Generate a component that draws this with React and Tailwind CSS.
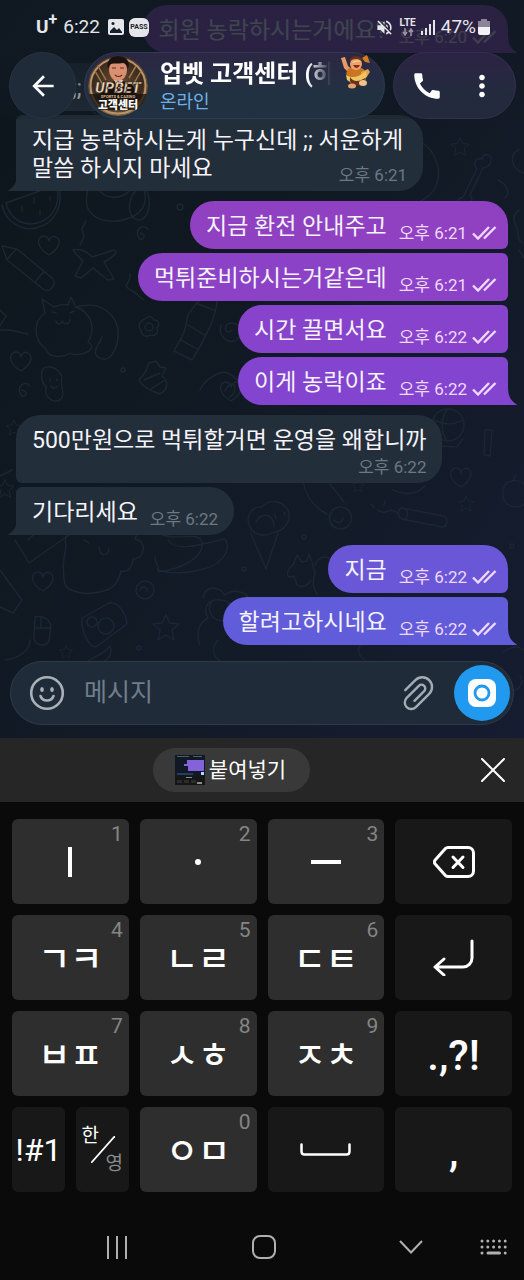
import { MdArrowBack, MdCall, MdMoreVert, MdVolumeOff } from "react-icons/md";

const groups = [
  {
    out: true,
    items: [{ text: "회원 농락하시는거에요?", time: "오후 6:20", color: "bg-[#9040bc]" }],
  },
  {
    out: false,
    items: [
      { text: ";;", indent: true },
      { text: "지급 농락하시는게 누구신데 ;; 서운하게\n말씀 하시지 마세요", time: "오후 6:21", layout: "overlap" },
    ],
  },
  {
    out: true,
    items: [
      { text: "지금 환전 안내주고", time: "오후 6:21", color: "bg-[#8f41c2]" },
      { text: "먹튀준비하시는거같은데", time: "오후 6:21", color: "bg-[#8b42c7]" },
      { text: "시간 끌면서요", time: "오후 6:22", color: "bg-[#8743cc]" },
      { text: "이게 농락이죠", time: "오후 6:22", color: "bg-[#8344d0]" },
    ],
  },
  {
    out: false,
    items: [
      { text: "500만원으로 먹튀할거면 운영을 왜합니까", time: "오후 6:22", layout: "stack" },
      { text: "기다리세요", time: "오후 6:22" },
    ],
  },
  {
    out: true,
    items: [
      { text: "지금", time: "오후 6:22", color: "bg-[#6957d8]" },
      { text: "할려고하시네요", time: "오후 6:22", color: "bg-[#615cda]" },
    ],
  },
];

const tailColors = {
  "bg-[#9040bc]": "text-[#9040bc]",
  "bg-[#8344d0]": "text-[#8344d0]",
  "bg-[#615cda]": "text-[#615cda]",
};

function Tail({ out, color }) {
  return (
    <svg
      viewBox="0 0 14 18"
      className={`absolute bottom-0 h-[18px] w-[14px] ${
        out ? `-right-[9px] ${tailColors[color]}` : "-left-2 -scale-x-100 text-[#222e39]"
      }`}
      aria-hidden="true"
    >
      <path d="M0 0h5c0 8 2 13.500 8.500 17.200.6.400.3.800-.4.800H0z" fill="currentColor" />
    </svg>
  );
}

function Ticks() {
  return (
    <svg viewBox="0 0 25 14" className="h-[14px] w-[25px]" fill="none" stroke="currentColor" strokeWidth="2.400" aria-hidden="true">
      <path d="M1 7.500l5 5L17 1M12 12.500L23.500 1" />
    </svg>
  );
}

function Bubble({ item, out, first, last }) {
  const base = "relative w-fit max-w-full rounded-[24px] pt-3 pb-[6px]";
  const side = out
    ? `self-end pl-4 pr-[11px] rounded-br-md ${item.color} ${first ? "" : "rounded-tr-md"}`
    : `self-start px-4 rounded-bl-md bg-[#222e39] ${first ? "" : "rounded-tl-md"}`;

  let inner = "flex items-end gap-3";
  if (item.layout === "stack") inner = "flex flex-col";
  if (item.layout === "overlap") inner = "grid";

  return (
    <div className={`${base} ${side}`}>
      {last && <Tail out={out} color={item.color} />}
      <div className={inner}>
        <p
          className={`mb-[2px] whitespace-pre-line text-[23px] leading-7 text-[#f6f3fa] ${
            item.layout === "overlap" ? "col-start-1 row-start-1 pr-1" : ""
          } ${item.indent ? "pl-10 pr-40" : ""}`}
        >
          {item.text}
        </p>
        {item.time && (
          <div
            className={`flex shrink-0 items-center gap-[5px] text-[17px] leading-5 ${
              out ? "text-[#f0d9fb]" : "self-end text-[#6c7883]"
            } ${item.layout === "overlap" ? "col-start-1 row-start-1 justify-self-end" : ""}`}
          >
            <time>{item.time}</time>
            {out && <Ticks />}
          </div>
        )}
      </div>
    </div>
  );
}

function Star({ x, y, r = 1 }) {
  return <path transform={`translate(${x} ${y}) scale(${r})`} d="M0-13l4 8 9 1-7 6 2 10-8-5-8 5 2-10-7-6 9-1z" />;
}

function Heart({ x, y }) {
  return <path transform={`translate(${x} ${y})`} d="M0 10C-14 2-12-9-5-9-2-9 0-6 0-4 1-8 4-10 7-8 14-4 8 5 0 10z" />;
}

function Flower({ x, y }) {
  return (
    <g transform={`translate(${x} ${y})`}>
      <circle r="4" />
      <path d="M-4-8C0-12 4-10 5-7 10-7 11-2 8 1 10 6 5 10 1 8-3 11-8 8-8 3-12 0-9-7-4-8z" />
    </g>
  );
}

function Doodles() {
  return (
    <svg
      viewBox="0 0 524 738"
      preserveAspectRatio="xMidYMid slice"
      className="absolute inset-0 h-full w-full text-[#1c2733]"
      fill="none"
      stroke="currentColor"
      strokeWidth="1.400"
      strokeLinejoin="round"
      strokeLinecap="round"
      aria-hidden="true"
    >
      <Star x={460} y={147} r={0.7} />
      <Star x={466} y={504} r={0.6} />
      <Star x={166} y={628} r={1} />
      <Star x={66} y={652} r={0.5} />
      <Star x={358} y={486} r={0.5} />
      <Star x={5} y={489} r={0.7} />
      <Star x={14} y={428} r={0.6} />
      <Heart x={49} y={245} />
      <Heart x={461} y={477} />
      <Heart x={21} y={361} />
      <Heart x={43} y={581} />
      <Heart x={231} y={391} />
      <Flower x={149} y={327} />
      <Flower x={100} y={105} />
      {/* watermelon and dog */}
      <path d="M6 203L56 185c7 20-6 38-25 39-12 0-22-8-25-21zM2 205c4 18 20 26 34 23 19-4 29-24 22-44M22 206v5M34 198v5M40 210v5M50 197v3" />
      <path d="M88 190c-6 18 4 30 22 31 14 1 30-5 34-16 3-10 0-18-4-24M98 188c6 12 24 12 32 2M136 190c-10 12-8 28 2 30 12 0 14-20 8-30" />
      {/* pencil */}
      <path d="M2 246l15 3 35 29c6 6-2 16-9 11L7 260zM17 249c-4 3-7 6-10 11M44 272c-4 3-7 7-9 11" />
      {/* plane */}
      <path d="M73 250c10-2 15 3 19 7l22-7c6 2-4 9-10 12l10 17-6 1-15-12-12 10-6-2 8-15-8-8zM80 245l4-8-2-8 4-8" />
      <path d="M140 238c8 2 2 9-1 5-5-9 4-15 9-9M22 395c8 2 2 9-1 5-5-9 4-15 9-9" transform="translate(0 -5)" />
      {/* cat */}
      <path d="M45 313l-3-14 12 8c6-3 9-3 14-2l3-8 5 10c16 6 20 22 12 35 12 8-10 16-18 11-7 5-22 5-24-4-12-8-14-27-1-36zM76 307c25-7 41 8 42 24 1 20-10 34-20 26-7-5 2-14 4-20M56 321c2 5 6 3 6 0 3 5 8 3 8-2M52 312l4 1M70 313l4-2" />
      {/* bottle */}
      <path d="M204 291l13 4c2 17-12 44-25 65l-18-9c8-14 13-22 13-33 2-9 15-17 17-27zM198 304l16 6M188 325l18 11M181 340l16 9" />
      <path d="M232 330c-5 5-10-2-4-6 10-5 18 10 8 16-9 5-18-5-15-15M146 371l3-8 7-2 4 6 6 1-4 8c8 6 5 14-2 18-8-3-19-8-21-14zM144 380l16-7M151 389l14-9" />
      <path d="M44 368c8-4 17 3 18 10-3 6 5 16-2 22-8 4-16-4-14-13-5-5-6-15-2-19zM50 379v2M57 379v2M51 386c2 3 5 3 6 0" />
      <path d="M200 390c4-9 14-16 23-18 9 1 17 9 20 19M225 391c8-16 15-1 5 6" />
      <path d="M12 470l-12 6M0 330h10l18 4M0 310l6 6-6 10M130 274c2 8-8 10-1 15 7 3 10 8 15 11" />
      {/* bone, curve and planet */}
      <path d="M463 197l14-28c-5-6 0-12 5-10 2-7 10-5 9 1 0 6-6 8-8 8l-13 27c5 6-2 12-5 8-7 5-12-3-2-6zM421 142c16 10 22 30 14 46-4 9-14 12-20 17" />
      <path d="M519 150c-10 3-9 19 5 23M519 210c-9 7-4 13-2 18 2 6 0 13 6 15M519 250l5 8M498 180c10 5 12 14 7 18" />
      {/* balloon and rocket */}
      <circle cx="448" cy="425" r="16" />
      <path d="M436 437l3 9 18 1 6-8M434 420c10 5 20 5 28 0M447 409c-7 11-6 24 0 32M485 430h7l-2 26-6-1z" />
      <path d="M303 480c3 20 14 29 24 34M330 484l14 18M340 507a11 11 0 1 0 1 22 11 11 0 0 0-1-22zM334 520c4 4 8 3 9-2" />
      <path d="M402 508l42 8c5 3 3 11-2 11l-40-8c-5-3-5-10 0-11zM405 509c4 3 3 7 0 10M398 514c-9-9-12 3-20-4M374 507l-3-3M384 505l1-4" />
      <path d="M508 482c14-5 22 5 20 16-5 14-24 10-25-2-1-6 1-11 5-14zM512 482l4-7M392 489c8 5 23 8 33-3" />
      {/* ice cream */}
      <path d="M250 527c-6-12 4-21 12-20 6-8 20-7 26 3 4 10-3 21-14 22-8 5-20 4-24-5zM251 534l15 35 12-36M256 522c4-10 18-9 18 5M275 515l1 3M284 512l1 3" />
      {/* deer and rabbit */}
      <path d="M294 576c-10 4-7-7-1-11l4-10 5 7 5-1 2-7 3 8 3 12c-2 5-3 13 2 20M294 576l3 9c6 4 12-1 14-5M315 565c4-10 16-11 18 0" />
      <path d="M66 545c-3-10 5-15 14-14 2-13 20-18 30-8 12-8 32 2 25 16 13 2 10 20-2 20-1 12-8 13-12 12-2 10-6 16-14 19-10 3-24 5-33 1-14-2-9-19-11-25zM84 540l5 3M99 547c0 10 10 10 10 1" />
      {/* swimmer */}
      <path d="M163 535c15 6 37-5 39 8 2 18-34 30-44 28 2-6-3-4-3-15M168 540c8 14 40 2 57-1 8 12-6 27-22 30-12 4-35 6-46 0" />
      <path d="M15 540l14 23 40-28M28 540l20-18M0 570l22 30-9 13-13-6" />
      <circle cx="145" cy="590" r="9" />
      <path d="M140 590c2-5 8-3 7 1M35 617c8-2 14 2 16 9l-2 15c-5 7-14 4-15-3zM34 628h17M41 617v11" />
      {/* camera */}
      <path d="M82 618l27-15c9-2 17 10 18 21L96 647c-7 1-15-16-14-29z" />
      <circle cx="106" cy="626" r="8" />
      <circle cx="92" cy="622" r="5" />
      <path d="M203 598c2-13 16-12 22-3 9-7 21-3 24 4M200 645c-5-12 0-23 8-27-10-18 15-24 24-12M212 601a12 12 0 1 0 20 2M30 640c0 10-10 18-25 20M218 640c-12 15 3 28 25 24M365 642c-10 4-7 14 0 18M503 652c14-10 24-3 24 6M510 690c10 2 14-9 10-14" />
      <path d="M85 665c4-9 18-8 25-19 5 13-12 22-25 19z" />
      <circle cx="180" cy="207" r="3" />
      <circle cx="123" cy="370" r="2" />
      <circle cx="304" cy="537" r="2" />
      <circle cx="244" cy="569" r="2" />
      <circle cx="512" cy="546" r="2" />
      <circle cx="139" cy="648" r="2" />
    </svg>
  );
}

function Avatar() {
  return (
    <svg viewBox="0 0 60 60" className="h-[60px] w-[60px] shrink-0 rounded-full" role="img" aria-label="UPBET 고객센터">
      <defs>
        <radialGradient id="gold" cx="50%" cy="45%" r="55%">
          <stop offset="0" stopColor="#6b4d31" />
          <stop offset="0.75" stopColor="#3a291d" />
          <stop offset="1" stopColor="#8a6a47" />
        </radialGradient>
      </defs>
      <circle cx="30" cy="30" r="30" fill="url(#gold)" />
      <circle cx="30" cy="30" r="27.500" fill="none" stroke="#b89468" strokeWidth="2" />
      <path d="M7 15l8 14M10 10l8 14M53 15l-8 14M48 10l-7 12" stroke="#9b7850" strokeWidth="1.500" />
      <path d="M12 42c0-12 7-17 18-17s19 5 19 17z" fill="#15110f" />
      <path d="M26 24h9l-4 10z" fill="#d8d0c8" />
      <path d="M30 25l-2 3 2 8 3-8z" fill="#7c1717" />
      <ellipse cx="30" cy="14" rx="9" ry="11" fill="#d98f70" />
      <path d="M20 13C18 4 23 0 30 0s13 4 10 13c-1-4-3-6-5-6-5 1-9 0-12 1-2 1-2 3-3 5z" fill="#1a1110" />
      <path d="M24 12h4M32 12h4M27 19c2 2 5 2 7 0" stroke="#6b2b1f" strokeWidth="1.200" fill="none" />
      <rect y="38" width="60" height="16" fill="#17100c" opacity="0.750" />
      <text x="30" y="37" textAnchor="middle" fontFamily="Roboto, sans-serif" fontSize="15" fontWeight="900" fontStyle="italic" fill="#eed9c0" stroke="#2a1a10" strokeWidth="0.500">
        UPBET
      </text>
      <text x="30" y="42" textAnchor="middle" fontFamily="Roboto, sans-serif" fontSize="4" fontWeight="700" fill="#d9b98e">
        SPORTS &amp; CASINO
      </text>
      <text x="30" y="53" textAnchor="middle" fontFamily="'Noto Sans CJK KR', sans-serif" fontSize="11" fontWeight="900" fill="#fff">
        고객센터
      </text>
    </svg>
  );
}

function DancerEmoji() {
  return (
    <svg viewBox="0 0 32 34" className="h-[34px] w-8 shrink-0" aria-hidden="true">
      <path d="M1 3l4-1 3 9 5 4-3 4-6-6z" fill="#e79a62" />
      <path d="M22 3l5-3 3 8-5-1z" fill="#d47b24" />
      <path d="M8 14c5-4 14-3 17 2 3 6 0 13-7 14-8 1-15-8-10-16z" fill="#c97524" />
      <path d="M21 17l7-3 2 3-4 6-4 2z" fill="#e6a04e" />
      <path d="M6 20c6 4 13 2 20-4l1 5c-6 6-14 8-20 4z" fill="#edc565" />
      <circle cx="16" cy="9" r="6" fill="#eba36d" />
      <path d="M9 6c2-6 11-7 14 0l-3-1c-3-2-7-1-11 1z" fill="#6f2f14" />
      <path d="M12 8c3-3 6-3 10-1-3-1-7 0-10 1z" fill="#f1d79b" />
      <path d="M13 10c2 4 5 4 7 0z" fill="#8a2b1a" />
      <path d="M10 22c3 5 9 5 15 1l-2 6c-5 3-11 2-13-3z" fill="#6a3216" />
      <ellipse cx="12" cy="31" rx="4" ry="2.500" fill="#e8a36c" />
      <ellipse cx="23" cy="28" rx="4" ry="3" fill="#f0c08d" />
    </svg>
  );
}

function StatusBar() {
  return (
    <div className="flex h-[52px] items-center pt-[2px] pr-[34px] pl-9 text-[19px] text-[#e4e6ea]">
      <span className="font-bold">
        U<sup className="text-base">+</sup>
      </span>
      <span className="ml-[6px]">6:22</span>
      <svg viewBox="0 0 16 16" className="ml-2 h-4 w-4" aria-hidden="true">
        <rect width="16" height="16" rx="2" fill="#e4e6ea" />
        <path d="M2 12l4-4 3 3 2-2 3 4v1H2z" fill="#17202a" />
        <circle cx="5" cy="4.500" r="1.500" fill="#17202a" />
      </svg>
      <span className="ml-[5px] flex h-[19px] w-5 items-center justify-center rounded-md bg-[#e4e6ea] text-[7px] font-bold text-[#17202a]">
        PASS
      </span>
      <div className="ml-auto flex items-center">
        <MdVolumeOff className="h-[19px] w-[19px]" />
        <span className="ml-[6px] flex flex-col items-center text-[10px] leading-[10px] font-bold">
          LTE
          <svg viewBox="0 0 12 8" className="h-2 w-3" fill="none" stroke="#9a92a6" strokeWidth="1.500" aria-hidden="true">
            <path d="M3 0v7M1 4l2 3 2-3M9 8V1M7 4l2-3 2 3" />
          </svg>
        </span>
        <svg viewBox="0 0 14 15" className="ml-[5px] h-[15px] w-[14px]" aria-hidden="true">
          <path d="M0 11h2v4H0zM4 8h2v7H4zM8 4h2v11H8zM12 0h2v15h-2z" fill="#e4e6ea" />
        </svg>
        <span className="ml-[6px]">47%</span>
        <svg viewBox="0 0 12 16" className="ml-[2px] h-4 w-3" aria-hidden="true">
          <path d="M3 0h6v2h3v6H0V2h3z" fill="#8c8496" />
          <path d="M0 8h12v6a2 2 0 0 1-2 2H2a2 2 0 0 1-2-2z" fill="#f2f2f5" />
        </svg>
      </div>
    </div>
  );
}

function Header() {
  return (
    <header className="absolute inset-x-0 top-0 bg-linear-to-b from-[#111a24]/80 from-45% to-[#111a24]/20 text-white">
      <StatusBar />
      <div className="flex gap-2 pr-2 pl-[9px]">
        <button aria-label="뒤로" className="flex h-[67px] w-[67px] shrink-0 items-center justify-center rounded-full border border-[#263442] bg-[#1f2b39]">
          <MdArrowBack className="h-8 w-8" />
        </button>
        <div className="flex h-[67px] min-w-0 flex-1 items-center rounded-full border border-[#303a50] bg-linear-to-b from-[#2b2744] to-[#223142] to-60% pr-3 pl-[3px]">
          <Avatar />
          <div className="ml-3 min-w-0 flex-1">
            <h1 className="overflow-hidden text-2xl leading-8 font-bold whitespace-nowrap [mask-image:linear-gradient(to_right,black_82%,transparent_95%)]">
              업벳 고객센터 (하
            </h1>
            <p className="text-lg leading-6 text-[#6cb2e6]">온라인</p>
          </div>
          <span className="self-start pt-[2px]">
            <DancerEmoji />
          </span>
        </div>
        <div className="flex h-[67px] w-[123px] shrink-0 items-center justify-between rounded-full border border-[#342f4e] bg-linear-to-b from-[#2c2343] to-[#232a3e] to-60% px-4">
          <button aria-label="전화">
            <MdCall className="h-[34px] w-[34px]" />
          </button>
          <button aria-label="메뉴">
            <MdMoreVert className="h-[34px] w-[34px]" />
          </button>
        </div>
      </div>
    </header>
  );
}

function Composer() {
  return (
    <div className="relative mx-[10px] mt-4 mb-[13px] flex h-16 items-center rounded-full border border-[#2c3b48] bg-[#1f2b38] pr-[3px] pl-[18px]">
      <button aria-label="이모티콘" className="shrink-0">
        <svg viewBox="0 0 36 36" className="h-9 w-9" fill="none" stroke="#a9b0b8" strokeWidth="2.600" strokeLinecap="round">
          <circle cx="18" cy="18" r="15.800" />
          <path d="M11.500 21c2 6 11 6 13 0" />
          <ellipse cx="13" cy="14.500" rx="1.800" ry="2.500" fill="#a9b0b8" stroke="none" />
          <ellipse cx="23" cy="14.500" rx="1.800" ry="2.500" fill="#a9b0b8" stroke="none" />
        </svg>
      </button>
      <input
        type="text"
        aria-label="메시지"
        placeholder="메시지"
        className="ml-[19px] min-w-0 flex-1 bg-transparent text-[25px] text-white outline-none placeholder:text-[#6f7e8c]"
      />
      <button aria-label="파일 첨부" className="shrink-0">
        <svg viewBox="-18 -18 36 36" className="h-9 w-9" fill="none" stroke="#a3acb5" strokeWidth="2.400" strokeLinecap="round">
          <path transform="rotate(45)" d="M-11 7V-7.300a9.750 9.750 0 0 1 19.500 0V11.500a6.500 6.500 0 0 1-13 0V-5.700a3.750 3.750 0 0 1 7.500 0V8" />
        </svg>
      </button>
      <button aria-label="카메라" className="ml-[18px] flex h-14 w-14 shrink-0 items-center justify-center rounded-full bg-[#2099ef]">
        <svg viewBox="0 0 28 28" className="h-7 w-7">
          <rect width="28" height="28" rx="8" fill="#fff" />
          <circle cx="14" cy="14" r="7" fill="none" stroke="#2099ef" strokeWidth="2.800" />
        </svg>
      </button>
    </div>
  );
}

function PasteBar() {
  return (
    <div className="flex h-16 items-center bg-[#262626] pr-[17px] text-white">
      <div className="flex flex-1 justify-center pr-4">
        <button className="flex h-11 items-center gap-1 rounded-full bg-[#393939] pr-6 pl-[22px] text-[21px]">
          <svg viewBox="0 0 30 30" className="h-[30px] w-[30px]" aria-hidden="true">
            <rect width="30" height="30" fill="#111826" />
            <path d="M2 1h12v1H2zM18 1h9v1h-9z" fill="#44606a" />
            <path d="M12 5h17v4H12zM9 9h20v2H9zM13 11h16v5H13z" fill="#8561da" />
            <path d="M2 18h16v2H2z" fill="#273b5c" />
            <path d="M26 17h3v3h-3z" fill="#a8dcff" />
            <path d="M0 21h30v9H0z" fill="#141715" />
            <path d="M11 22h6v1h-6zM22 27h5v2h-5z" fill="#8c8c8c" />
            <path d="M2 25h5v3H2zM9 25h5v3H9zM16 25h5v3h-5z" fill="#2a2c2a" />
          </svg>
          <span className="pt-[2px]">붙여넣기</span>
        </button>
      </div>
      <button aria-label="닫기" className="flex h-7 w-7 items-center justify-center">
        <svg viewBox="0 0 24 24" className="h-6 w-6" stroke="white" strokeWidth="2" strokeLinecap="round">
          <path d="M1 1l22 22M23 1L1 23" />
        </svg>
      </button>
    </div>
  );
}

function Key({ hint, dark, label, className = "", children }) {
  return (
    <button
      aria-label={label}
      className={`relative flex h-[85px] items-center justify-center rounded-md text-white ${
        dark ? "bg-[#181818]" : "bg-[#2e2e2e]"
      } ${className}`}
    >
      {hint && (
        <span className="absolute top-[3px] right-[6px] text-[21px] leading-6 font-normal text-[#858585]">{hint}</span>
      )}
      {children}
    </button>
  );
}

function Keyboard() {
  const jamo = "pt-2 text-[35px] font-medium";
  return (
    <div className="grid grid-cols-4 gap-[11px] px-3 pt-[17px]">
      <Key hint="1" label="ㅣ">
        <svg viewBox="0 0 4 30" className="h-[30px] w-1">
          <path d="M0 0h4v30H0z" fill="currentColor" />
        </svg>
      </Key>
      <Key hint="2" label="ㆍ">
        <svg viewBox="0 0 6 6" className="h-[6px] w-[6px]">
          <circle cx="3" cy="3" r="3" fill="currentColor" />
        </svg>
      </Key>
      <Key hint="3" label="ㅡ">
        <svg viewBox="0 0 30 4" className="h-1 w-[30px]">
          <path d="M0 0h30v4H0z" fill="currentColor" />
        </svg>
      </Key>
      <Key dark label="지우기">
        <svg viewBox="0 0 42 32" className="h-8 w-[42px]" fill="none" stroke="currentColor" strokeWidth="3" strokeLinecap="round" strokeLinejoin="round">
          <path d="M15 1.500h20a5.500 5.500 0 0 1 5.500 5.500v18a5.500 5.500 0 0 1-5.500 5.500H15c-1 0-2-.5-2.800-1.200L2.200 18c-1-1.200-1-2.800 0-4L12.200 2.700C13 2 14 1.500 15 1.500z" />
          <path d="M20 11l10 10.500M30 11L20 21.500" />
        </svg>
      </Key>

      <Key hint="4" className={jamo}>ㄱㅋ</Key>
      <Key hint="5" className={jamo}>ㄴㄹ</Key>
      <Key hint="6" className={jamo}>ㄷㅌ</Key>
      <Key dark label="줄바꿈">
        <svg viewBox="0 0 41 37" className="h-[37px] w-[41px]" fill="none" stroke="currentColor" strokeWidth="3" strokeLinecap="round" strokeLinejoin="round">
          <path d="M39 2v17a9 9 0 0 1-9 9H3M11 20l-9 8 9 8" />
        </svg>
      </Key>

      <Key hint="7" className={jamo}>ㅂㅍ</Key>
      <Key hint="8" className={jamo}>ㅅㅎ</Key>
      <Key hint="9" className={jamo}>ㅈㅊ</Key>
      <Key dark className="pt-1 text-[42px] font-medium">.,?!</Key>

      <div className="grid grid-cols-2 gap-[11px]">
        <Key dark className="text-[32px]">!#1</Key>
        <Key dark label="한/영">
          <span className="flex flex-col text-[19px] leading-6">
            <span className="pr-6">한</span>
            <span className="pt-1 pl-6 text-[#8a8a8a]">영</span>
          </span>
          <svg viewBox="0 0 24 27" className="absolute top-[29px] left-[15px] h-[27px] w-6" stroke="white" strokeWidth="1.800">
            <path d="M0 27L24 0" />
          </svg>
        </Key>
      </div>
      <Key hint="0" className={jamo}>ㅇㅁ</Key>
      <Key dark label="스페이스">
        <svg viewBox="0 0 51 13" className="h-[13px] w-[51px]" fill="none" stroke="currentColor" strokeWidth="2.500" strokeLinecap="round">
          <path d="M1.500 1.500v7c0 2 1 3 3 3h42c2 0 3-1 3-3v-7" />
        </svg>
      </Key>
      <Key dark className="pt-1 text-[42px] font-medium">,</Key>
    </div>
  );
}

function NavBar() {
  return (
    <nav className="mt-[22px] flex h-[66px] items-center pl-11 text-[#b0b0b0]">
      <button aria-label="최근 앱" className="flex flex-1 justify-center">
        <svg viewBox="0 0 22 23" className="h-[23px] w-[22px]" stroke="currentColor" strokeWidth="2">
          <path d="M2 0v23M11 0v23M20 0v23" />
        </svg>
      </button>
      <button aria-label="홈" className="flex flex-1 justify-center">
        <svg viewBox="0 0 24 24" className="h-6 w-6" fill="none" stroke="currentColor" strokeWidth="2">
          <rect x="1" y="1" width="22" height="22" rx="7" />
        </svg>
      </button>
      <button aria-label="키보드 숨기기" className="flex flex-1 justify-center">
        <svg viewBox="0 0 24 14" className="h-[14px] w-6" fill="none" stroke="currentColor" strokeWidth="2">
          <path d="M1 1l11 11.500L23 1" />
        </svg>
      </button>
      <button aria-label="키보드 변경" className="w-10">
        <svg viewBox="0 0 28 16" className="-ml-1 h-4 w-7" stroke="currentColor" strokeWidth="3" strokeLinecap="round">
          <path strokeDasharray="0 5.800" d="M2 2h24M2 8h24" />
          <path d="M2 14h0M25.200 14h0M8 14h11.500" />
        </svg>
      </button>
    </nav>
  );
}

export default function App() {
  return (
    <div className="flex min-h-screen flex-col bg-[#0a0a0a] font-[Roboto,'Noto_Sans_CJK_KR',sans-serif]">
      <main className="relative overflow-hidden bg-linear-to-br from-[#0d151b] via-[#111a24] to-[#161c31]">
        <Doodles />
        <div className="relative flex flex-col gap-[10px] px-4 pt-[5px]">
          {groups.map((group, g) => (
            <div key={g} className="flex flex-col gap-1">
              {group.items.map((item, i) => (
                <Bubble
                  key={i}
                  item={item}
                  out={group.out}
                  first={i === 0}
                  last={i === group.items.length - 1}
                />
              ))}
            </div>
          ))}
        </div>
        <Header />
        <Composer />
      </main>
      <PasteBar />
      <Keyboard />
      <NavBar />
    </div>
  );
}
